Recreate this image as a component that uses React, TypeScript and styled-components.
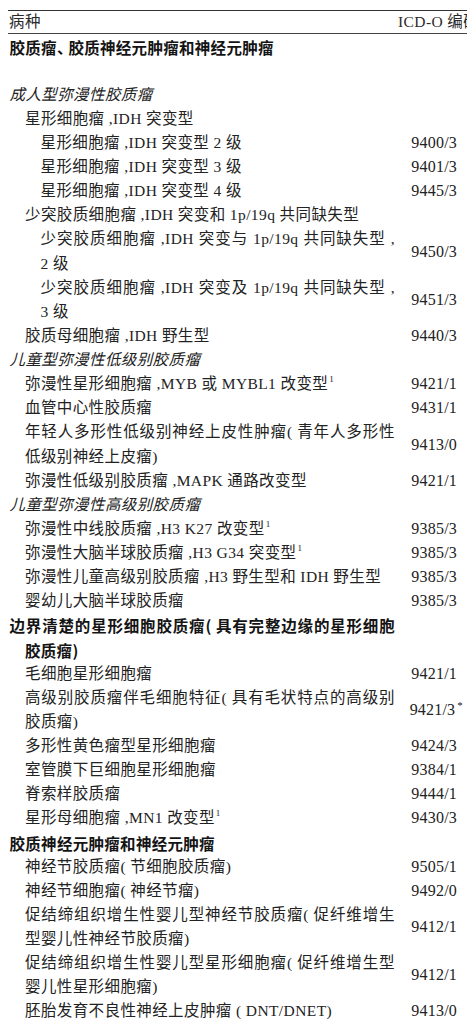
import React from "react";
import styled, { createGlobalStyle } from "styled-components";

const Global = createGlobalStyle`
  html, body { margin: 0; padding: 0; background: #ffffff; overflow: hidden; }
  body { font-family: "Liberation Serif", "Noto Sans CJK SC", serif; color: #222222; }
`;

const LINE = 24.12;
const STEP = 15.5;

const Table = styled.div`
  margin-left: 8px;
  width: 480px;
  padding-top: 9.5px;
`;

const HeaderRow = styled.div`
  display: grid;
  grid-template-columns: 389px 1fr;
  align-items: center;
  height: 22px;
  border-top: 1.5px solid #333;
  border-bottom: 1px solid #444;
  font-size: 15.5px;
  letter-spacing: 0.4px;
  color: #2a2a2a;
  white-space: nowrap;
`;

const HeadCell = styled.div<{ $pad?: number }>`
  padding-left: ${(p) => p.$pad ?? 1}px;
  line-height: 22px;
`;

const Body = styled.div`
  padding-top: 1px;
`;

const Row = styled.div`
  display: grid;
  grid-template-columns: 387px 62px;
  align-items: center;
`;

type Kind = "plain" | "bold" | "italic";

const Name = styled.div<{ $kind: Kind }>`
  font-size: 15.5px;
  line-height: ${LINE}px;
  letter-spacing: ${(p) => (p.$kind === "bold" ? "0.3px" : "0.4px")};
  font-weight: ${(p) => (p.$kind === "bold" ? 700 : 400)};
  font-style: ${(p) => (p.$kind === "italic" ? "italic" : "normal")};
  font-family: ${(p) =>
    p.$kind === "bold"
      ? `"Noto Sans CJK SC", sans-serif`
      : `"Liberation Serif", "Noto Sans CJK SC", serif`};
  color: ${(p) => (p.$kind === "bold" ? "#141414" : "#222222")};
`;

const Line = styled.span<{ $indent: number; $justify?: boolean }>`
  display: block;
  padding-left: ${(p) => p.$indent}px;
  white-space: ${(p) => (p.$justify ? "normal" : "nowrap")};
  text-align: ${(p) => (p.$justify ? "justify" : "left")};
  text-align-last: ${(p) => (p.$justify ? "justify" : "auto")};
`;

const Narrow = styled.span`
  letter-spacing: -4px;
`;

const Code = styled.div`
  text-align: right;
  font-size: 16px;
  letter-spacing: 0.2px;
  line-height: ${LINE}px;
  white-space: nowrap;
  color: #222222;
`;

const Sup = styled.sup`
  font-size: 9px;
  line-height: 0;
  vertical-align: 7px;
  margin-left: 1px;
  letter-spacing: 0;
`;

const Star = styled.sup`
  font-size: 11px;
  line-height: 0;
  vertical-align: 6px;
  margin-left: 2px;
  margin-right: -6px;
`;

const Blank = styled.div`
  height: ${LINE}px;
`;

type Item = {
  lv: number;
  kind?: Kind;
  lines: React.ReactNode[];
  code?: React.ReactNode;
  hang?: number;
};

const one = <Sup>1</Sup>;

const items: (Item | "blank")[] = [
  { lv: 0, kind: "bold", lines: [<>胶质瘤<Narrow>、</Narrow>胶质神经元肿瘤和神经元肿瘤</>] },
  "blank",
  { lv: 0, kind: "italic", lines: ["成人型弥漫性胶质瘤"] },
  { lv: 1, lines: ["星形细胞瘤 ,IDH 突变型"] },
  { lv: 2, lines: ["星形细胞瘤 ,IDH 突变型 2 级"], code: "9400/3" },
  { lv: 2, lines: ["星形细胞瘤 ,IDH 突变型 3 级"], code: "9401/3" },
  { lv: 2, lines: ["星形细胞瘤 ,IDH 突变型 4 级"], code: "9445/3" },
  { lv: 1, lines: ["少突胶质细胞瘤 ,IDH 突变和 1p/19q 共同缺失型"] },
  { lv: 2, lines: ["少突胶质细胞瘤 ,IDH 突变与 1p/19q 共同缺失型 ,", "2 级"], code: "9450/3" },
  { lv: 2, lines: ["少突胶质细胞瘤 ,IDH 突变及 1p/19q 共同缺失型 ,", "3 级"], code: "9451/3" },
  { lv: 1, lines: ["胶质母细胞瘤 ,IDH 野生型"], code: "9440/3" },
  { lv: 0, kind: "italic", lines: ["儿童型弥漫性低级别胶质瘤"] },
  { lv: 1, lines: [<>弥漫性星形细胞瘤 ,MYB 或 MYBL1 改变型{one}</>], code: "9421/1" },
  { lv: 1, lines: ["血管中心性胶质瘤"], code: "9431/1" },
  { lv: 1, lines: ["年轻人多形性低级别神经上皮性肿瘤( 青年人多形性", "低级别神经上皮瘤)"], code: "9413/0" },
  { lv: 1, lines: ["弥漫性低级别胶质瘤 ,MAPK 通路改变型"], code: "9421/1" },
  { lv: 0, kind: "italic", lines: ["儿童型弥漫性高级别胶质瘤"] },
  { lv: 1, lines: [<>弥漫性中线胶质瘤 ,H3 K27 改变型{one}</>], code: "9385/3" },
  { lv: 1, lines: [<>弥漫性大脑半球胶质瘤 ,H3 G34 突变型{one}</>], code: "9385/3" },
  { lv: 1, lines: ["弥漫性儿童高级别胶质瘤 ,H3 野生型和 IDH 野生型"], code: "9385/3" },
  { lv: 1, lines: ["婴幼儿大脑半球胶质瘤"], code: "9385/3" },
  { lv: 0, kind: "bold", hang: 1, lines: ["边界清楚的星形细胞胶质瘤( 具有完整边缘的星形细胞", "胶质瘤)"] },
  { lv: 1, lines: ["毛细胞星形细胞瘤"], code: "9421/1" },
  { lv: 1, lines: ["高级别胶质瘤伴毛细胞特征( 具有毛状特点的高级别", "胶质瘤)"], code: <>9421/3<Star>*</Star></> },
  { lv: 1, lines: ["多形性黄色瘤型星形细胞瘤"], code: "9424/3" },
  { lv: 1, lines: ["室管膜下巨细胞星形细胞瘤"], code: "9384/1" },
  { lv: 1, lines: ["脊索样胶质瘤"], code: "9444/1" },
  { lv: 1, lines: [<>星形母细胞瘤 ,MN1 改变型{one}</>], code: "9430/3" },
  { lv: 0, kind: "bold", lines: ["胶质神经元肿瘤和神经元肿瘤"] },
  { lv: 1, lines: ["神经节胶质瘤( 节细胞胶质瘤)"], code: "9505/1" },
  { lv: 1, lines: ["神经节细胞瘤( 神经节瘤)"], code: "9492/0" },
  { lv: 1, lines: ["促结缔组织增生性婴儿型神经节胶质瘤( 促纤维增生", "型婴儿性神经节胶质瘤)"], code: "9412/1" },
  { lv: 1, lines: ["促结缔组织增生性婴儿型星形细胞瘤( 促纤维增生型", "婴儿性星形细胞瘤)"], code: "9412/1" },
  { lv: 1, lines: ["胚胎发育不良性神经上皮肿瘤 ( DNT/DNET)"], code: "9413/0" },
];

const indentOf = (lv: number) => 1.5 + lv * STEP;

export default function App() {
  return (
    <>
      <Global />
      <Table>
        <HeaderRow>
          <HeadCell>病种</HeadCell>
          <HeadCell $pad={1}>ICD-O 编码</HeadCell>
        </HeaderRow>
        <Body>
          {items.map((it, i) => {
            if (it === "blank") return <Blank key={i} />;
            const kind = it.kind ?? "plain";
            const contLv = it.lv + (it.hang ?? 0);
            return (
              <Row key={i}>
                <Name $kind={kind}>
                  {it.lines.map((ln, j) => (
                    <Line
                      key={j}
                      $indent={indentOf(j === 0 ? it.lv : contLv)}
                      $justify={j < it.lines.length - 1}
                    >
                      {ln}
                    </Line>
                  ))}
                </Name>
                <Code>{it.code ?? ""}</Code>
              </Row>
            );
          })}
        </Body>
      </Table>
    </>
  );
}
